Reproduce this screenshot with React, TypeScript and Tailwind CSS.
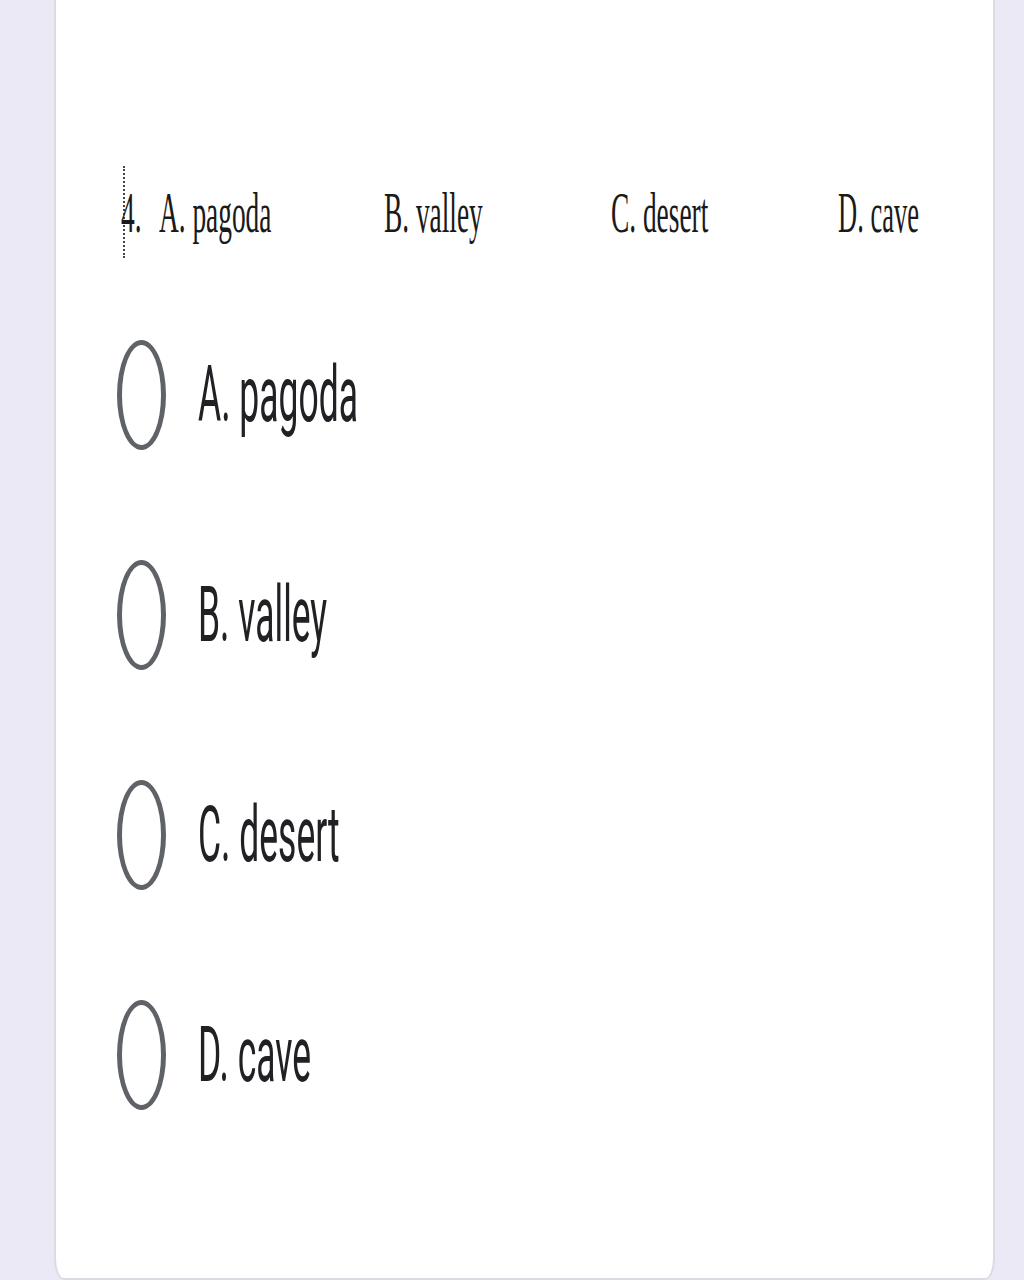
const choices = ["A. pagoda", "B. valley", "C. desert", "D. cave"];

function SquashedText({ children, className }: { children: React.ReactNode; className?: string }) {
  return (
    <span className={"inline-block origin-left whitespace-nowrap " + (className ?? "scale-x-[0.48]")}>
      {children}
    </span>
  );
}

function QuestionImage() {
  return (
    <div className="relative ml-[6px] flex h-[92px] items-center font-['Liberation_Serif',serif] text-[57px] leading-none text-[#1a1a1a]">
      <div className="absolute left-0 top-0 h-full border-l-2 border-dotted border-[#444]" />
      <div className="-ml-[2px] w-[38px] shrink-0">
        <SquashedText>4.</SquashedText>
      </div>
      <div className="w-[225px] shrink-0">
        <SquashedText>A. pagoda</SquashedText>
      </div>
      <div className="w-[227px] shrink-0">
        <SquashedText>B. valley</SquashedText>
      </div>
      <div className="w-[227px] shrink-0">
        <SquashedText>C. desert</SquashedText>
      </div>
      <div className="shrink-0">
        <SquashedText className="scale-x-[0.465]">D. cave</SquashedText>
      </div>
    </div>
  );
}

function RadioOption({ label }: { label: string }) {
  return (
    <label className="flex h-[220px] items-center">
      <span className="h-[110px] w-[49px] shrink-0 rounded-[50%] border-[5px] border-[#5f6368]" />
      <span className="ml-[32px] font-['Roboto',sans-serif] text-[78px] leading-none text-[#202124]">
        <SquashedText className="scale-x-[0.455]">{label}</SquashedText>
      </span>
    </label>
  );
}

export default function App() {
  return (
    <div className="h-[1280px] w-full overflow-hidden bg-[#ece9f7]">
      <div className="ml-[54px] h-full w-[941px] rounded-b-[10px_22px] border-x-2 border-b-2 border-[#dcdae3] bg-white px-[61px] pt-[166px]">
        <QuestionImage />
        <div className="mt-[27px] flex flex-col">
          {choices.map((c) => (
            <RadioOption key={c} label={c} />
          ))}
        </div>
      </div>
    </div>
  );
}
